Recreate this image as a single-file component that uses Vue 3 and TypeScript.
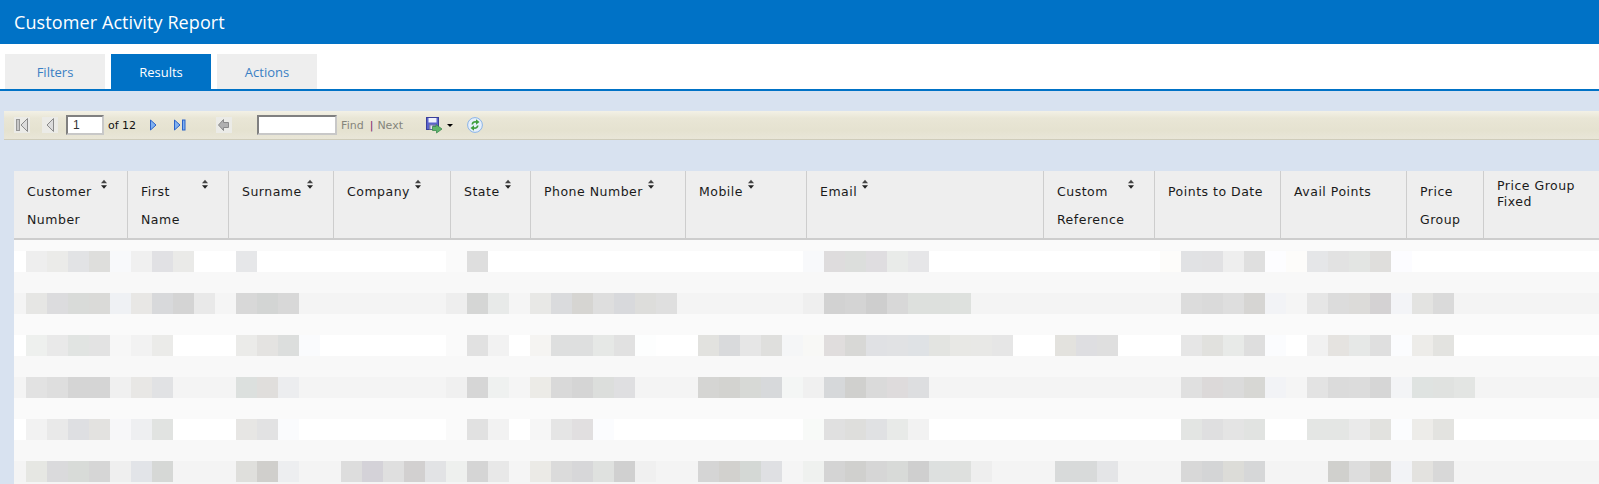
<script setup lang="ts">
interface Col { label: string; width: number; sort?: boolean; labelWidth?: number; tight?: boolean }

const tabs = [
  { name: 'Filters', active: false },
  { name: 'Results', active: true },
  { name: 'Actions', active: false },
]

const cols: Col[] = [
  { label: 'Customer\nNumber', width: 114, sort: true, labelWidth: 69 },
  { label: 'First\nName', width: 101, sort: true, labelWidth: 56 },
  { label: 'Surname', width: 105, sort: true },
  { label: 'Company', width: 117, sort: true },
  { label: 'State', width: 80, sort: true },
  { label: 'Phone Number', width: 155, sort: true },
  { label: 'Mobile', width: 121, sort: true },
  { label: 'Email', width: 237, sort: true },
  { label: 'Custom\nReference', width: 111, sort: true, labelWidth: 66 },
  { label: 'Points to Date', width: 126 },
  { label: 'Avail Points', width: 126 },
  { label: 'Price\nGroup', width: 77 },
  { label: 'Price Group\nFixed', width: 120, tight: true },
]

const rowData: string[] = [
  'eeeeee ebebe9 e2e3e5 dededc f8f9fb f0f0f0 e1e1e4 eaeae8 . . e6e7e9 *9 fafafa dedede *15 f8f9fb dedcdd dcdedc dfdde0 e9ebe9 e6e6e8 *11 fdfcfa e1e2e4 e1e1e3 eeeeee dfdfdf fdfdff fdfcfa e5e6e8 e2e2e2 e3e5e3 dfdedc fcfcff',
  'e6e6e4 dcdcde d9dbd9 dadad8 eff1f4 e8e7e5 d8d9db d4d4d4 e9e9e9 f5f5f5 d8d8d8 d3d5d4 d8d8d8 *7 eeeeee d5d6d5 e8eae9 f5f5f5 e8e8e6 dadbdd d6d5d2 dedede d8d9dc dddddb dfdfdf *6 efefef d2d2d2 d4d4d4 cecece d8d8d8 dde0dd dde0dd dee1de *10 dcdcdc dadada dedede d6d5d3 f2f3f6 f5f5f5 e6e6e6 dcdcdc dcdbd9 d4d2d3 f3f4f7 e3e3e1 dadada',
  'eef0ee e9e9e9 e1e4e2 e3e3e3 f7f7f7 f2f2f2 ebebe9 . . . ebebe9 e4e3e1 dcdedd fafbfd *6 fafafa e1e1e1 f2f2f2 . f5f4f2 dedfdf dedfdf e6e8e6 e1e1e1 fdfefe . . e2e2df d9dadc e6e6e6 dfdfdd f5f6f7 f8f8f6 e0dddd d8d8d6 e0e1e4 e1e2e4 dfe2e5 e3e4e1 e8e8e5 e8e8e6 e6e6e6 . . e3e2de dedee1 dfdfdf . . . e6e6e6 e1e1de e8eae8 dedede fbfcfe . f1f1f1 e5e3e0 e6e8e7 dfdfdf fbfcfe edece9 e3e3e0',
  'e2e2e2 dedede d5d5d5 d5d5d5 f0f0f0 e8e7e5 e1e2e4 . . . dce0de e0dedc ecedef *7 f0f0f0 d6d6d6 eff1f0 f5f5f5 ecebe7 d9d9d9 d5d5d5 dcdedc dfdfe1 . . . d5d5d3 d3d3d0 d7d9d6 d7d9db f4f6f5 f0f0f0 d6d8da d0d0ce dadada dedbdc dddee0 *12 e0e0e0 dcd9d9 dbdbdb d7d7d4 f2f3f6 f5f5f5 e3e3e3 dbdbdb dcdcdc d6d6d6 f3f4f6 dfe3e1 e0e2e0 e3e5e3',
  'f2f2f2 e9e9e9 dedfe2 e3e2e0 f7f7f9 eeeff1 e1e3e1 . . . e7e6e4 e2e2e3 fafbfd *7 fafafa e1e1e1 f2f2f2 . f6f6f6 e5e5e5 e1dfe0 fbfcfe *9 f8faf8 e0e0e0 dededc e0e1e3 e8eae8 f2f2f2 *12 e3e5e3 dfdfe0 e4e4e4 e1e3e1 . . e4e6e4 e4e6e4 eaeaea e2e2df fbfcfe edece9 e3e3e0',
  'e6e7e3 dadadc d8dbd8 d6d6d6 efefef e2e4e8 d6d8d6 . . . dfdfdc d0cfcc edeef0 . . dddddd d4d2d8 dfdfdf d2d0d0 e2e3e5 eef0ee d5d5d5 e8e8e8 f5f5f5 ebeae6 dbdbdb d7d7d9 dfe1df d0d0d0 f0f0f0 . . d5d5d5 d2d1ce d4d8d5 dfe0e3 f5f5f5 eff1ef d4d4d4 d0d0ce d6d6d6 d8dad8 cfcfcf dde0df dee0de eeeeee . . . d8dada d8dada e4e5e7 . . . d8d8d8 d4d5d6 dcdcd8 d6d7d8 . . . d0d0cd dddddd d4d3d0 f2f3f6 e3e2df d8d8d8',
]

function expand(s: string): string[] {
  const out: string[] = []
  for (const t of s.split(' ')) {
    if (t.startsWith('*')) {
      for (let i = 0; i < Number(t.slice(1)); i++) out.push('transparent')
    } else {
      out.push(t === '.' ? 'transparent' : '#' + t)
    }
  }
  return out
}

const rows = rowData.map(expand)
const rowTones = ['white', 'grey', 'white', 'grey', 'white', 'grey']
const spacers = ['s1', 's2', 's1', 's2', 's1', 's3']
</script>

<template>
  <div class="page">
    <header class="title-bar">Customer Activity Report</header>
    <nav class="tabs">
      <div v-for="t in tabs" :key="t.name" class="tab" :class="{ active: t.active }">{{ t.name }}</div>
    </nav>

    <div class="toolbar">
      <span class="btn first-btn">
        <svg width="16" height="16" viewBox="0 0 16 16"><rect x="2.500" y="2.500" width="3" height="11" fill="#c8c8c8" stroke="#969696" /><path d="M13.500 1.500v13L7 8z" fill="#dcdcdc" stroke="#8a8a8a" /></svg>
      </span>
      <span class="btn prev-btn">
        <svg width="16" height="16" viewBox="0 0 16 16"><path d="M11.500 1.500v13L5 8z" fill="#dcdcdc" stroke="#8a8a8a" /></svg>
      </span>
      <span class="page-input">1</span>
      <span class="of">of 12</span>
      <svg class="next" width="8" height="12" viewBox="0 0 8 12"><path d="M1.500 1v10L7 6z" fill="#7fb0f0" stroke="#2a62c8" /></svg>
      <svg class="last" width="12" height="12" viewBox="0 0 12 12"><path d="M.5 1v10L6 6z" fill="#7fb0f0" stroke="#2a62c8" /><rect x="8.500" y="1" width="2.500" height="10" fill="#7fb0f0" stroke="#2a62c8" /></svg>
      <span class="btn back-btn">
        <svg width="16" height="16" viewBox="0 0 16 16"><path d="M7.500 2.500v3H12.500v5H7.500v3L2.500 8z" fill="#b0b0b0" stroke="#8a8a8a" /></svg>
      </span>
      <span class="find-input"></span>
      <span class="find">Find</span>
      <span class="sep">|</span>
      <span class="find">Next</span>
      <svg class="save" width="17" height="17" viewBox="0 0 17 17">
        <rect x="0.500" y="0.500" width="12" height="12" fill="#5a62cc" stroke="#3a3f9a" />
        <rect x="2.500" y="1" width="8" height="4.500" fill="#f0f2fc" />
        <rect x="3" y="7.500" width="7" height="5" fill="#7c7fa8" />
        <rect x="4.500" y="8.500" width="2" height="3.500" fill="#e8e8f4" />
        <path d="M6.500 9.500h3.500V7.500L16 12l-5.500 4v-2.500h-4z" fill="#5fb56a" stroke="#3c8a50" stroke-width=".8" />
      </svg>
      <span class="caret"></span>
      <svg class="refresh" width="16" height="16" viewBox="0 0 16 16">
        <circle cx="8" cy="8" r="7.400" fill="#e6effa" stroke="#8ab4e8" />
        <path d="M4.500 7.500C4.500 5 7 3.800 9 4.200V2.200L12.500 5 9 7.800V5.800C7.500 5.500 6.200 6 6.100 7.500z" fill="#3f9e3c" />
        <path d="M11.500 8.500C11.500 11 9 12.200 7 11.800v2L3.500 11 7 8.200v2c1.500.3 2.800-.2 2.900-1.700z" fill="#3f9e3c" />
      </svg>
    </div>

    <div class="report">
      <div class="thead">
        <div v-for="c in cols" :key="c.label" class="th" :class="{ tight: c.tight }" :style="{ width: c.width + 'px' }">
          <span class="label" :style="c.labelWidth ? { width: c.labelWidth + 'px' } : undefined">{{ c.label }}</span>
          <svg v-if="c.sort" class="sort" width="6" height="11" viewBox="0 0 7 12">
            <path d="M3.500 .5L7 4.500H0z" fill="#444" />
            <path d="M0 7h7L3.500 11z" fill="#222" />
          </svg>
        </div>
      </div>
      <div class="spacer s0"></div>
      <template v-for="(r, i) in rows" :key="i">
        <div class="row" :class="rowTones[i]">
          <span v-for="(bg, j) in r" :key="j" class="px" :style="{ background: bg }"></span>
        </div>
        <div v-if="i < rows.length - 1" class="spacer" :class="spacers[i]"></div>
      </template>
      <div class="foot"></div>
    </div>
  </div>
</template>

<style scoped>
.page {
  width: 1599px;
  height: 484px;
  overflow: hidden;
  background: #d8e2f0;
}
.title-bar {
  height: 44px;
  box-sizing: border-box;
  padding: 0 0 0 14px;
  background: #0072c6;
  color: #fff;
  font: 18px/44px "Open Sans", sans-serif;
  letter-spacing: .1px;
}
.tabs {
  display: flex;
  gap: 6px;
  box-sizing: border-box;
  height: 47px;
  padding: 10px 0 0 5px;
  background: #fff;
  border-bottom: 2px solid #0072c6;
}
.tab {
  width: 100px;
  height: 35px;
  background: #eeeeee;
  color: #3a80c4;
  font: 13px/36px "Open Sans", sans-serif;
  text-align: center;
}
.tab.active {
  background: #0072c6;
  color: #fff;
}
.toolbar {
  display: flex;
  align-items: center;
  box-sizing: border-box;
  height: 29px;
  margin: 20px 0 0 4px;
  padding-left: 10px;
  background: linear-gradient(#f3f1e6 0, #e9e6d6 25%, #e5e2d0 70%, #e9e6d8 100%);
  border-bottom: 1px solid #cfccba;
  font: 11px "DejaVu Sans", sans-serif;
  color: #111;
}
.btn {
  display: block;
  width: 16px;
  height: 16px;
  background: #ebebe7;
}
.btn svg { display: block; }
.prev-btn { margin-left: 12px; }
.page-input {
  box-sizing: border-box;
  width: 38px;
  height: 20px;
  margin-left: 8px;
  padding-left: 5px;
  background: #fff;
  border: 2px solid;
  border-color: #808080 #c8c8c8 #c8c8c8 #808080;
  color: #333;
  font: 12px/16px "Liberation Sans", sans-serif;
}
.of { margin-left: 4px; }
.next { margin-left: 13px; }
.last { margin-left: 17px; }
.back-btn { margin-left: 30px; }
.find-input {
  box-sizing: border-box;
  width: 80px;
  height: 20px;
  margin-left: 25px;
  background: #fff;
  border: 2px solid;
  border-color: #808080 #c8c8c8 #c8c8c8 #808080;
}
.find {
  color: #85857c;
  margin-left: 4px;
}
.sep {
  color: #7a1f6e;
  margin-left: 6px;
}
.sep + .find { margin-left: 4px; }
.save { margin-left: 23px; }
.caret {
  width: 0;
  height: 0;
  margin-left: 4px;
  border: 3px solid transparent;
  border-top: 3px solid #000;
  border-bottom: 0;
}
.refresh { margin-left: 14px; }
.report { margin: 31px 0 0 14px; }
.thead {
  display: flex;
  box-sizing: border-box;
  width: 1700px;
  height: 69px;
  background: #eeeeee;
  border-bottom: 2px solid #cdcdcd;
}
.th {
  display: flex;
  align-items: flex-start;
  box-sizing: border-box;
  flex: none;
  padding: 7px 0 0 13px;
  border-right: 1px solid #cdcdcd;
  color: #1a1a1a;
  font: 12.500px/28px "DejaVu Sans", sans-serif;
  letter-spacing: .5px;
}
.th.tight { line-height: 16px; }
.th:last-child { flex: 1; border-right: 0; }
.label {
  flex: none;
  white-space: pre-line;
}
.sort {
  flex: none;
  margin: 1px 0 0 5px;
}
.spacer { height: 21px; }
.s0 { height: 11px; background: #fafafa; }
.s1 { background: #f8f8f8; }
.s2 { background: #fafafa; }
.s3 { background: #f7f7f7; }
.row {
  display: flex;
  height: 21px;
  padding-left: 12px;
}
.row.white { background: #fff; }
.row.grey { background: #f4f4f4; }
.px {
  flex: none;
  width: 21px;
  height: 21px;
}
.foot { height: 10px; background: #f5f5f5; }
</style>
